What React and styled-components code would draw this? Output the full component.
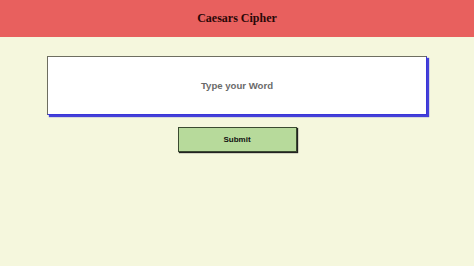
import React from "react";
import styled, { createGlobalStyle } from "styled-components";

const Global = createGlobalStyle`
  html, body { margin: 0; padding: 0; background: #f5f7dd; }
  * { box-sizing: border-box; }
`;

const Page = styled.div`
  min-height: 266px;
  background: #f5f7dd;
  display: flex;
  flex-direction: column;
`;

const Header = styled.header`
  height: 37px;
  background: #e8605e;
  display: flex;
  align-items: center;
  justify-content: center;
`;

const Title = styled.h1`
  margin: 0;
  font-family: "Liberation Serif", serif;
  font-size: 12px;
  font-weight: bold;
  color: #2a0808;
`;

const Main = styled.main`
  display: flex;
  flex-direction: column;
  align-items: center;
  padding-top: 19px;
`;

const WordInput = styled.input`
  width: 380px;
  height: 59px;
  background: #fff;
  border: 1px solid #6e6e60;
  border-right-color: #3a35d8;
  border-bottom-color: #3a35d8;
  box-shadow: 2px 2px 1px #4440d8;
  font-family: "Liberation Sans", Arial, sans-serif;
  font-weight: bold;
  font-size: 9.6px;
  text-align: center;
  outline: none;
  &::placeholder { color: #6a6a6a; }
`;

const SubmitButton = styled.button`
  margin-top: 12px;
  width: 119px;
  height: 25px;
  background: #b7da9b;
  border: 1px solid #3a4a30;
  box-shadow: 1px 1px 1px #222;
  font-family: "Liberation Sans", Arial, sans-serif;
  font-weight: bold;
  font-size: 8px;
  color: #111;
  cursor: pointer;
`;

export default function App() {
  return (
    <Page>
      <Global />
      <Header>
        <Title>Caesars Cipher</Title>
      </Header>
      <Main>
        <WordInput placeholder="Type your Word" />
        <SubmitButton>Submit</SubmitButton>
      </Main>
    </Page>
  );
}
